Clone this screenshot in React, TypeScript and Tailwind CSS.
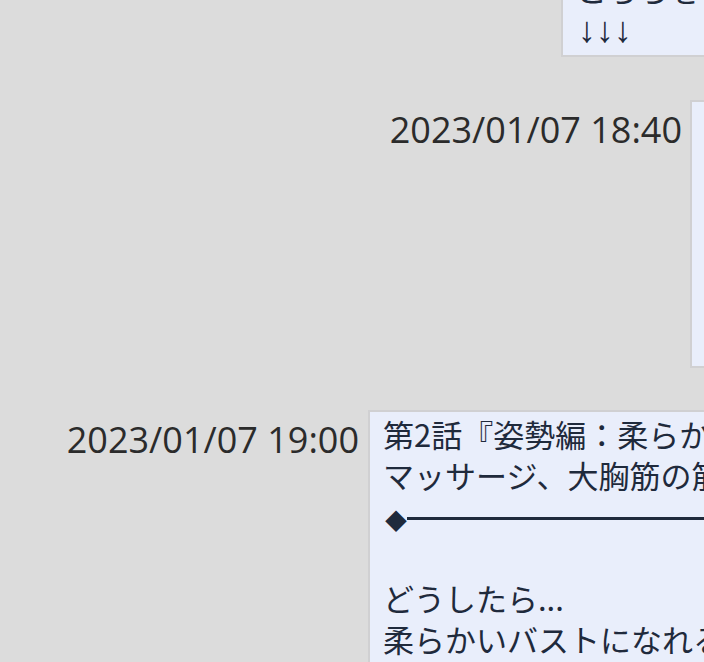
const jp = "font-['Noto_Sans_CJK_JP',sans-serif]";
const stamp = "font-['Open_Sans','Noto_Sans_CJK_JP',sans-serif]";

function Bubble({
  width,
  children,
  className = "",
}: {
  width: string;
  children: React.ReactNode;
  className?: string;
}) {
  return (
    <div
      className={`${width} shrink-0 overflow-hidden border-2 border-[#d0d0d2] bg-[#e9eefb] pl-[13px] text-[31px] leading-[41px] text-[#1f2a3c] ${jp} ${className}`}
    >
      {children}
    </div>
  );
}

function Stamp({ children }: { children: React.ReactNode }) {
  return (
    <div
      className={`shrink-0 whitespace-nowrap pt-[3px] text-[36px] leading-[54px] text-[#2b2b2b] ${stamp}`}
    >
      {children}
    </div>
  );
}

export default function App() {
  return (
    <div className="h-[662px] w-[704px] overflow-hidden bg-[#dcdcdc]">
      <div className="flex w-[1000px] flex-col gap-[43px] pr-4">
        <div className="-mt-[34px] flex justify-end">
          <Bubble width="w-[423px]" className="pb-[5px]">
            <div className="whitespace-nowrap">こちらをご覧ください。</div>
            <div className="whitespace-nowrap pl-[2px] font-['Liberation_Sans',sans-serif] text-[36px]">
              ↓↓↓
            </div>
          </Bubble>
        </div>

        <div className="flex items-start justify-end gap-2">
          <Stamp>2023/01/07 18:40</Stamp>
          <Bubble width="w-[294px]">
            <div className="h-[264px]" />
          </Bubble>
        </div>

        <div className="-mt-[1px] flex items-start justify-end gap-[9px]">
          <Stamp>2023/01/07 19:00</Stamp>
          <Bubble width="w-[616px]" className="pt-[1px] pb-4">
            <div className="whitespace-nowrap">
              第2話『姿勢編：柔らかいバストを作る』
            </div>
            <div className="whitespace-nowrap">
              マッサージ、大胸筋の筋膜リリース
            </div>
            <div className="flex h-[41px] items-center pl-[2px] pt-[6px]">
              <span className="text-[22px] leading-none">◆</span>
              <span className="h-[3px] flex-1 bg-[#1f2a3c]" />
            </div>
            <div className="h-[41px]" />
            <div className="whitespace-nowrap">どうしたら...</div>
            <div className="whitespace-nowrap">柔らかいバストになれるの？</div>
            <div className="whitespace-nowrap">その答えがここにあります。</div>
          </Bubble>
        </div>
      </div>
    </div>
  );
}
